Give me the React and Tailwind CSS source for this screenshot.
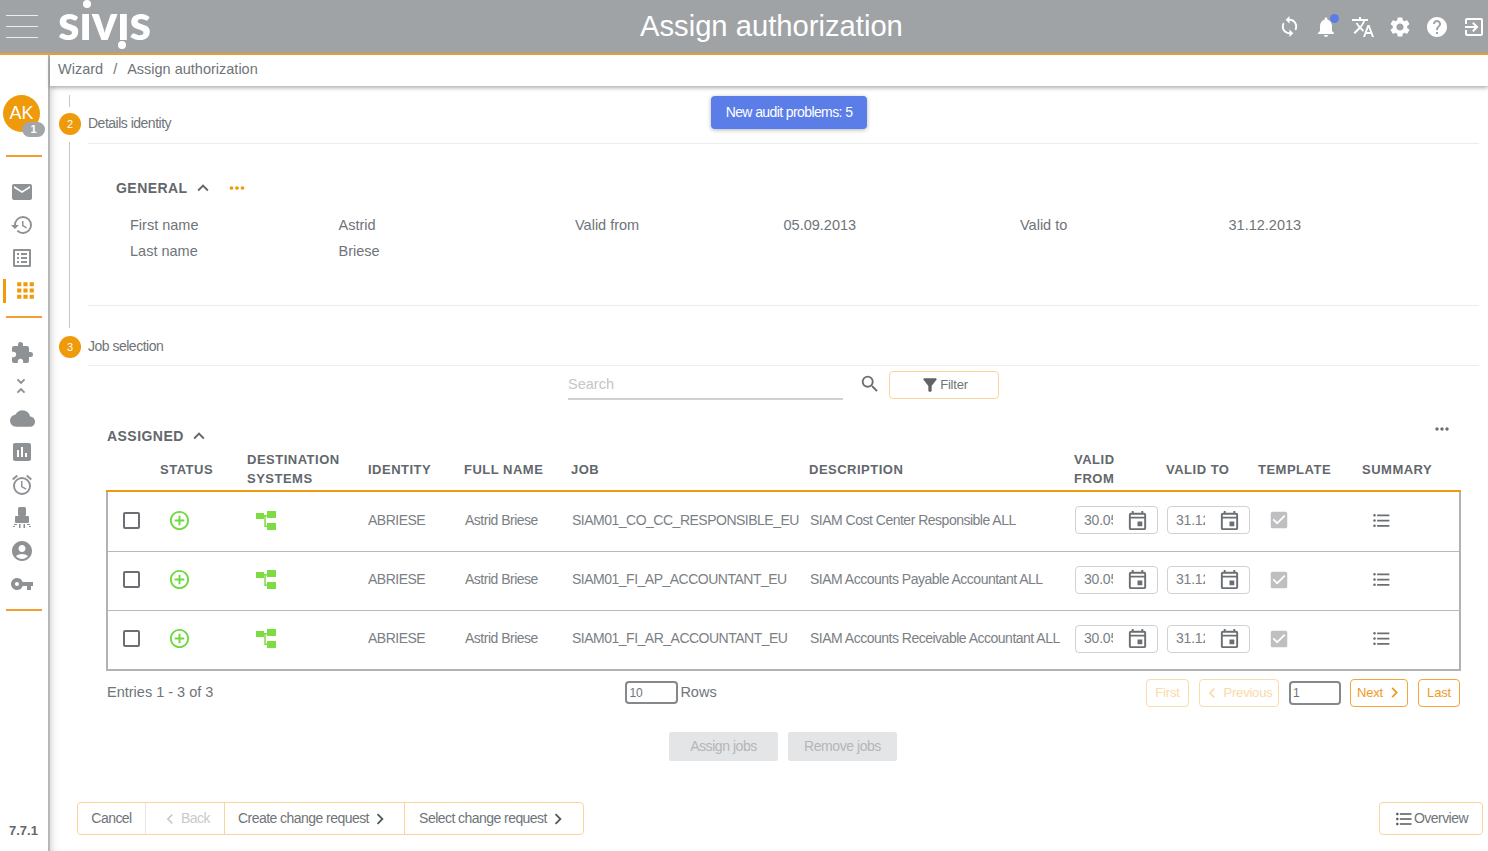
import React from 'react';
import {
  MdSync, MdNotifications, MdTranslate, MdSettings, MdHelp, MdOutlineExitToApp, MdEmail, MdHistory,
  MdOutlineListAlt, MdApps, MdExtension, MdUnfoldLess, MdCloud, MdAssessment, MdOutlineAlarm,
  MdAccountCircle, MdVpnKey, MdExpandLess, MdMoreHoriz, MdSearch, MdFilterAlt, MdOutlineAddCircleOutline,
  MdOutlineEvent, MdCheckBox, MdFormatListBulleted, MdChevronLeft, MdChevronRight,
} from 'react-icons/md';

const font = { fontFamily: '"Liberation Sans", Arial, sans-serif' };

const Logo = () => (
  <div className="relative ml-[20px] h-[55px] w-[92px] overflow-visible">
    <span className="absolute left-0 top-0 text-[49px] leading-[45px] font-black text-white tracking-[-0.5px] [font-family:Lato,sans-serif]">sıvıs</span>
    <span className="absolute left-[25px] top-[1px] h-[8px] w-[8px] rounded-full bg-white"></span>
    <span className="absolute left-[60px] top-[42px] h-[8px] w-[8px] rounded-full bg-white"></span>
  </div>
);

const Header = () => (
  <header className="flex h-[55px] shrink-0 items-center border-b-2 border-[#f0a030] bg-[#9fa3a6]">
    <div className="ml-[6px] flex w-[32px] flex-col gap-[10px]">
      <span className="h-px bg-white/80"></span>
      <span className="h-px bg-white/80"></span>
      <span className="h-px bg-white/80"></span>
    </div>
    <Logo />
    <h1 className="absolute left-[640px] text-[29.2px] font-normal leading-[53px] text-white">Assign authorization</h1>
    <div className="ml-auto mr-[2px] flex items-center gap-[13px] text-white">
      <MdSync size={23} />
      <span className="relative">
        <MdNotifications size={24} />
        <span className="absolute right-[-1px] top-[-1px] h-[9px] w-[9px] rounded-full bg-[#5b7de8]"></span>
      </span>
      <MdTranslate size={24} />
      <MdSettings size={24} />
      <MdHelp size={24} />
      <MdOutlineExitToApp size={24} />
    </div>
  </header>
);

const Robot = () => (
  <svg width="20" height="24" viewBox="0 0 20 24" fill="#8f9295">
    <rect x="6" y="1" width="8" height="9" rx="1.500" />
    <rect x="3" y="10" width="14" height="7" rx="1" />
    <rect x="7" y="18" width="1.500" height="4" />
    <rect x="11.500" y="18" width="1.500" height="4" />
    <rect x="2" y="18" width="3" height="1" />
    <rect x="15" y="18" width="3" height="1" />
    <rect x="1" y="20" width="2" height="1" />
    <rect x="17" y="20" width="2" height="1" />
  </svg>
);

const Divider = ({ className }) => <div className={`mx-[6px] h-[2px] w-[36px] bg-[#f0a030] ${className}`}></div>;

const Sidebar = () => {
  const gray = 'text-[#8f9295]';
  return (
    <aside className="relative z-10 flex w-[50px] shrink-0 flex-col border-r-2 border-[#b5b7b9] bg-white">
      <div className="relative ml-[3px] mt-[40px] flex h-[37px] w-[37px] items-center justify-center rounded-full bg-[#ee9a0a] text-[18px] text-white">
        AK
        <span className="absolute bottom-[-5px] right-[-5px] flex h-[15px] w-[23px] items-center justify-center rounded-full bg-[#a3a6a8] text-[11px] font-bold leading-none">1</span>
      </div>
      <Divider className="mt-[23px]" />
      <div className={`mt-[18px] flex flex-col items-start pl-[10px] ${gray}`}>
        <div className="flex h-[33px] items-center"><MdEmail size={24} /></div>
        <div className="flex h-[33px] items-center"><MdHistory size={24} /></div>
        <div className="flex h-[33px] items-center"><MdOutlineListAlt size={24} /></div>
      </div>
      <div className="flex h-[33px] items-center">
        <span className="ml-[3px] h-[24px] w-[3px] bg-[#ee9a0a]"></span>
        <MdApps size={25} className="ml-[7px] text-[#ee9a0a]" />
      </div>
      <Divider className="mt-[9px]" />
      <div className={`mt-[18px] flex flex-col items-start pl-[10px] ${gray}`}>
        <div className="flex h-[33px] items-center"><MdExtension size={24} /></div>
        <div className="flex h-[33px] items-center"><MdUnfoldLess size={22} /></div>
        <div className="flex h-[33px] items-center"><MdCloud size={25} /></div>
        <div className="flex h-[33px] items-center"><MdAssessment size={24} /></div>
        <div className="flex h-[33px] items-center"><MdOutlineAlarm size={24} /></div>
        <div className="flex h-[33px] items-center pl-[2px]"><Robot /></div>
        <div className="flex h-[33px] items-center"><MdAccountCircle size={24} /></div>
        <div className="flex h-[33px] items-center"><MdVpnKey size={24} /></div>
      </div>
      <Divider className="mt-[9px]" />
      <div className="mb-[11px] ml-[9px] mt-auto text-[13px] font-bold text-[#62676c]">7.7.1</div>
    </aside>
  );
};

const Step = ({ n, label }) => (
  <div className="ml-[9px] flex h-[22px] items-center gap-[7px]">
    <span className="flex h-[22px] w-[22px] items-center justify-center rounded-full bg-[#ee9a0a] text-[11px] text-white">{n}</span>
    <span className="pb-[1px] text-[14px] tracking-[-0.5px] text-[#6f7479]">{label}</span>
  </div>
);

const DateBox = ({ value }) => (
  <div className="flex h-[28px] w-[83px] items-center rounded-[4px] border border-[#cfd1d3] pl-[8px]">
    <input readOnly value={value} className="w-[29px] text-[14px] tracking-[-0.2px] text-[#7b8085] outline-none" />
    <MdOutlineEvent size={23} className="ml-[13px] text-[#6b6f73]" />
  </div>
);

const TreeIcon = () => (
  <svg width="21" height="19" viewBox="0 0 21 19" fill="#7cdc42">
    <rect x="0" y="2" width="8" height="6" />
    <rect x="11" y="0" width="9" height="7" />
    <rect x="11" y="12" width="9" height="7" />
    <path d="M8 4h3v1.500h-1.200v9H11V16H8.300V5.500H8z" />
  </svg>
);

const rows = [
  ['SIAM01_CO_CC_RESPONSIBLE_EU', 'SIAM Cost Center Responsible ALL'],
  ['SIAM01_FI_AP_ACCOUNTANT_EU', 'SIAM Accounts Payable Accountant ALL'],
  ['SIAM01_FI_AR_ACCOUNTANT_EU', 'SIAM Accounts Receivable Accountant ALL'],
];

const th = 'text-left align-middle text-[13px] font-bold leading-[19px] tracking-[0.5px] text-[#62676c]';

const JobsTable = () => (
  <table className="w-[1353px] table-fixed border-collapse">
    <colgroup>
      <col className="w-[53px]" />
      <col className="w-[87px]" />
      <col className="w-[121px]" />
      <col className="w-[96px]" />
      <col className="w-[107px]" />
      <col className="w-[238px]" />
      <col className="w-[265px]" />
      <col className="w-[92px]" />
      <col className="w-[92px]" />
      <col className="w-[104px]" />
      <col className="w-[98px]" />
    </colgroup>
    <thead>
      <tr className="h-[43px] border-b-2 border-[#ee9a0a]">
        <th></th>
        <th className={th}>STATUS</th>
        <th className={th}>DESTINATION<br />SYSTEMS</th>
        <th className={th}>IDENTITY</th>
        <th className={th}>FULL NAME</th>
        <th className={th}>JOB</th>
        <th className={th}>DESCRIPTION</th>
        <th className={th}>VALID<br />FROM</th>
        <th className={th}>VALID TO</th>
        <th className={th}>TEMPLATE</th>
        <th className={th}>SUMMARY</th>
      </tr>
    </thead>
    <tbody className="border-x-2 border-b-2 border-[#b0b2b4]">
      {rows.map(([job, description], i) => (
        <tr key={job} className={`${i === 1 ? 'h-[59px]' : 'h-[60px]'} ${i < 2 ? 'border-b border-[#b7b9bb]' : ''} text-[14px] tracking-[-0.5px] text-[#7b8085] [&>td]:pb-[2px]`}>
          <td className="pl-[15px]">
            <span className="block h-[17px] w-[17px] rounded-[2px] border-2 border-[#6b6f73]"></span>
          </td>
          <td className="pl-[8px]"><MdOutlineAddCircleOutline size={23} className="text-[#70d93f]" /></td>
          <td className="pl-[9px]"><TreeIcon /></td>
          <td>ABRIESE</td>
          <td className="pl-[1px]">Astrid Briese</td>
          <td className="whitespace-nowrap pl-[1px]">{job}</td>
          <td className="whitespace-nowrap pl-[1px]">{description}</td>
          <td className="pl-[1px]"><DateBox value="30.05.2013" /></td>
          <td className="pl-[1px]"><DateBox value="31.12.2013" /></td>
          <td className="pl-[10px]"><MdCheckBox size={22} className="text-[#bdbfc1]" /></td>
          <td className="pl-[9px]"><MdFormatListBulleted size={21} className="text-[#6b6f73]" /></td>
        </tr>
      ))}
    </tbody>
  </table>
);

const PageBtn = ({ children, off, className = '' }) => (
  <span className={`flex h-[28px] items-center rounded-[4px] border text-[13px] tracking-[-0.2px] ${off ? 'border-[#fbdcae] text-[#fbd9a8]' : 'border-[#f3a43a] text-[#f09a25]'} ${className}`}>{children}</span>
);

const Pager = () => (
  <div className="relative mt-[7px] flex h-[29px] w-[1354px] items-center pl-[1px] text-[14.500px] text-[#6f7479]">
    <span>Entries 1 - 3 of 3</span>
    <span className="ml-[412px] flex h-[23px] w-[53px] items-center rounded-[4px] border-2 border-[#85898c] pl-[2px] text-[12px]">10</span>
    <span className="ml-[2px]">Rows</span>
    <div className="ml-auto flex items-center">
      <PageBtn off className="w-[43px] justify-center">First</PageBtn>
      <PageBtn off className="ml-[10px] w-[80px] justify-center gap-[2px]"><MdChevronLeft size={20} className="ml-[-4px]" />Previous</PageBtn>
      <span className="ml-[10px] flex h-[24px] w-[52px] items-center rounded-[4px] border-2 border-[#85898c] pl-[2px] text-[12px]">1</span>
      <PageBtn className="ml-[9px] w-[58px] justify-center gap-[1px]">Next<MdChevronRight size={21} className="mr-[-4px]" /></PageBtn>
      <PageBtn className="ml-[10px] w-[42px] justify-center">Last</PageBtn>
    </div>
  </div>
);

const Footer = () => (
  <div className="mb-[16px] ml-[27px] mr-[5px] mt-auto flex items-center justify-between text-[14px] tracking-[-0.55px] text-[#6f7479]">
    <div className="flex h-[33px] items-stretch rounded-[4px] border border-[#fbd49c]">
      <span className="flex w-[68px] items-center justify-center border-r border-[#e6e6e6]">Cancel</span>
      <span className="flex w-[78px] items-center justify-center text-[#c8cacc]"><MdChevronLeft size={20} className="mr-[1px]" />Back</span>
      <span className="flex w-[180px] items-center justify-center border-l border-[#fbd49c]">Create change request<MdChevronRight size={22} className="text-[#55595c]" /></span>
      <span className="flex w-[179px] items-center justify-center border-l border-[#fbd49c]">Select change request<MdChevronRight size={22} className="text-[#55595c]" /></span>
    </div>
    <span className="flex h-[33px] w-[104px] items-center justify-center rounded-[4px] border border-[#fbd49c]">
      <MdFormatListBulleted size={20} className="text-[#55595c]" />Overview
    </span>
  </div>
);

const Content = () => (
  <div className="relative flex min-h-0 flex-1 flex-col overflow-hidden bg-white shadow-[inset_6px_0_8px_-6px_rgba(0,0,0,0.25)]">
    <button className="absolute left-[661px] top-[10px] h-[33px] w-[156px] rounded-[4px] bg-[#5b7de8] pb-[1px] text-[14px] tracking-[-0.6px] text-white shadow-[0_1px_4px_rgba(0,0,0,0.3)]">New audit problems: 5</button>

    <div className="ml-[19px] mt-[9px] h-[12px] border-l border-[#c4c6c8]"></div>
    <div className="mt-[6px]"><Step n="2" label="Details identity" /></div>

    {/* Details identity */}
    <div className="ml-[19px] mt-[7px] h-[186px] border-l border-[#c4c6c8] pl-[18px]">
      <div className="mr-[9px] mt-[1px] h-[163px] border-y border-[#ececec]">
        <div className="ml-[28px] mt-[35px] flex h-[18px] items-center text-[14px] font-bold tracking-[0.45px] text-[#62676c]">
          GENERAL
          <MdExpandLess size={22} className="ml-[4px]" />
          <MdMoreHoriz size={22} className="ml-[12px] text-[#ee9a0a]" />
        </div>
        <div className="ml-[42px] mt-[16px] flex h-[26px] items-center text-[14.500px] text-[#6f7479]">
          <span className="w-[208.500px]">First name</span>
          <span className="w-[236.500px]">Astrid</span>
          <span className="w-[208.500px]">Valid from</span>
          <span className="w-[236.500px]">05.09.2013</span>
          <span className="w-[208.500px]">Valid to</span>
          <span>31.12.2013</span>
        </div>
        <div className="ml-[42px] flex h-[26px] items-center text-[14.500px] text-[#6f7479]">
          <span className="w-[208.500px]">Last name</span>
          <span>Briese</span>
        </div>
      </div>
    </div>

    {/* Job selection */}
    <div className="mt-[8px]"><Step n="3" label="Job selection" /></div>
    <div className="ml-[38px] mr-[9px] mt-[7px] border-t border-[#ececec]"></div>

    <div className="ml-[518px] mt-[4px] flex h-[30px] items-stretch">
      <div className="flex h-[30px] w-[275px] items-center border-b-2 border-[#cfd1d3] pt-[1px] text-[14.500px] text-[#c4c6c8]">Search</div>
      <MdSearch size={22} className="ml-[16px] mt-[3px] text-[#6b6f73]" />
      <span className="ml-[8px] mt-[1px] flex h-[28px] w-[110px] items-center justify-center rounded-[4px] border border-[#fbd49c] text-[13px] tracking-[-0.2px] text-[#6f7479]">
        <MdFilterAlt size={20} className="text-[#5f6366]" />Filter
      </span>
    </div>

    <div className="ml-[56px] mt-[24px]">
      <div className="flex h-[24px] w-[1354px] items-center pl-[1px] text-[14px] font-bold tracking-[0.45px] text-[#62676c]">
        ASSIGNED
        <MdExpandLess size={22} className="ml-[4px]" />
        <MdMoreHoriz size={20} className="ml-auto mr-[8px] mt-[-14px] text-[#6b6f73]" />
      </div>
      <JobsTable />
      <Pager />
      <div className="ml-[563px] mt-[25px] flex gap-[10px] text-[14px] tracking-[-0.45px] text-[#b4b6b8]">
        <span className="flex h-[29px] w-[109px] items-center justify-center rounded-[2px] bg-[#e4e5e6]">Assign jobs</span>
        <span className="flex h-[29px] w-[109px] items-center justify-center rounded-[2px] bg-[#e4e5e6]">Remove jobs</span>
      </div>
    </div>

    <Footer />
  </div>
);

export default function App() {
  return (
    <div className="relative flex h-[851px] w-[1488px] flex-col overflow-hidden bg-white" style={font}>
      <Header />
      <div className="flex min-h-0 flex-1">
        <Sidebar />
        <main className="flex min-w-0 flex-1 flex-col">
          <div className="relative z-10 flex h-[31px] shrink-0 items-center bg-white pb-[2px] pl-[8px] text-[14.500px] text-[#6f7479] shadow-[0_2px_4px_rgba(0,0,0,0.3)]">
            Wizard<span className="mx-[10px]">/</span>Assign authorization
          </div>
          <Content />
        </main>
      </div>
    </div>
  );
}
